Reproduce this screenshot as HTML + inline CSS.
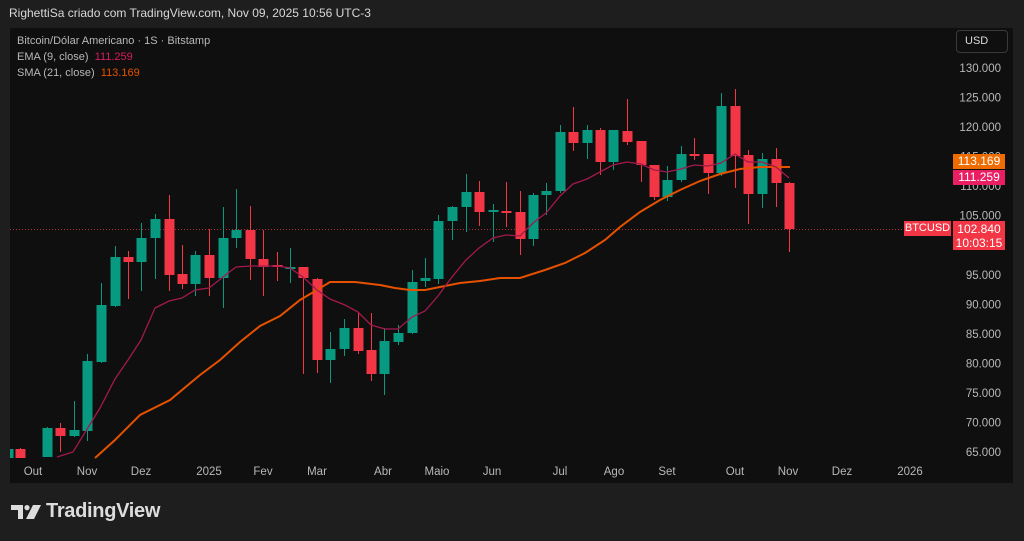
<!DOCTYPE html>
<html><head><meta charset="utf-8"><style>
body{margin:0;width:1024px;height:541px;background:#1e1e1e;overflow:hidden;font-family:"Liberation Sans",sans-serif;position:relative}
.t{position:absolute;white-space:nowrap}
</style></head><body>
<div class="t" style="left:9px;top:6px;font-size:12px;color:#d8d8d8">RighettiSa criado com TradingView.com, Nov 09, 2025 10:56 UTC-3</div>
<div style="position:absolute;left:10px;top:28px;width:1003px;height:455px;background:#0f0f0f"></div>
<svg id="c" width="1024" height="541" style="position:absolute;left:0;top:0"></svg>
<div class="t" style="left:17px;top:33px;font-size:11px;color:#b8b8b8;line-height:16px">Bitcoin/Dólar Americano · 1S · Bitstamp<br>EMA (9, close) &nbsp;<span style="color:#d81b60">111.259</span><br>SMA (21, close) &nbsp;<span style="color:#e65100">113.169</span></div>
<div style="position:absolute;left:956px;top:30px;width:52px;height:23px;border:1px solid #3a3a3a;border-radius:4px;box-sizing:border-box;color:#ddd;font-size:11px;line-height:21px;padding-left:8px">USD</div>
<div class="t" style="left:953px;top:154px;width:52px;height:15px;background:#ef6c00;color:#fff;font-size:12px;line-height:15px;text-align:center">113.169</div>
<div class="t" style="left:953px;top:170px;width:52px;height:15px;background:#e91e63;color:#fff;font-size:12px;line-height:15px;text-align:center">111.259</div>
<div class="t" style="left:904px;top:221px;width:47px;height:15px;background:#f23645;color:#fff;font-size:11px;line-height:15px;text-align:center">BTCUSD</div>
<div class="t" style="left:953px;top:221px;width:52px;height:29px;background:#f23645;color:#fff;font-size:12px;line-height:14px;text-align:center;padding-top:1px;box-sizing:border-box">102.840<br>10:03:15</div>
<svg width="30" height="14" style="position:absolute;left:11px;top:505px" viewBox="0 0 30 14"><path d="M0 0H12V14H7V5H0Z" fill="#ddd"/><circle cx="16" cy="2.6" r="2.6" fill="#ddd"/><path d="M22 0H30L23 14H15Z" fill="#ddd"/></svg>
<div class="t" style="left:46px;top:500px;font-size:20px;font-weight:bold;color:#ddd;letter-spacing:-0.3px">TradingView</div>
<script>
var s='';
function Y(p){return 68+(130000-p)/5000*29.54}
for(var p=65000;p<=130000;p+=5000){var y=Y(p);s+='<text x="1001" y="'+(y+4)+'" fill="#b8b8b8" font-size="11.5" text-anchor="end" font-family="Liberation Sans">'+(p/1000).toFixed(3)+'</text>'}
var xl=[['Out',33],['Nov',87],['Dez',141],['2025',209],['Fev',263],['Mar',317],['Abr',383],['Maio',437],['Jun',492],['Jul',560],['Ago',614],['Set',667],['Out',735],['Nov',788],['Dez',842],['2026',910]];
xl.forEach(function(a){s+='<text x="'+a[1]+'" y="475" fill="#b8b8b8" font-size="11.5" text-anchor="middle" font-family="Liberation Sans">'+a[0]+'</text>'});
s+='<line x1="10" y1="229.5" x2="904" y2="229.5" stroke="#f23645" stroke-dasharray="1 2" opacity="0.7"/>';
var C=[[8,458,449,448,458,1],[20,449,458,448,458,0],[47,457,428,427,457,1],[60,428,436,423,452,0],[74,436,430,401,437,1],[87,431,361,354,441,1],[101,362,305,283,363,1],[115,306,257,246,307,1],[128,257,262,251,299,0],[141,262,238,223,291,1],[155,238,219,214,279,1],[169,219,275,195,291,0],[182,274,284,245,289,0],[195,284,255,251,296,1],[209,255,278,229,296,0],[223,278,238,207,308,1],[236,238,230,189,248,1],[250,230,259,206,280,0],[263,259,267,230,296,0],[277,265,267,252,281,0],[290,268,267,248,283,1],[303,267,278,267,374,0],[317,279,360,278,373,0],[330,360,349,332,383,1],[344,349,328,319,356,1],[358,328,351,312,354,0],[371,350,374,313,381,0],[384,374,341,328,395,1],[398,342,333,325,345,1],[412,333,282,270,334,1],[425,281,278,258,287,1],[438,279,221,215,284,1],[452,221,207,206,240,1],[466,207,192,174,232,1],[479,192,212,181,226,0],[493,211,210,204,242,1],[506,211,213,182,227,0],[520,212,239,191,255,0],[533,239,195,193,246,1],[546,195,191,183,215,1],[560,191,132,125,193,1],[573,132,143,107,151,0],[587,143,130,125,159,1],[600,130,162,128,175,0],[613,162,130,130,170,1],[627,131,142,99,145,0],[641,141,165,141,182,0],[654,165,197,165,200,0],[667,197,180,166,201,1],[681,180,154,146,182,1],[694,154,155,138,160,0],[708,154,173,154,194,0],[721,173,106,93,176,1],[735,106,156,89,188,0],[748,155,194,150,224,0],[762,194,159,153,208,1],[776,159,183,148,207,0],[789,183,229,182,252,0]];
C.forEach(function(c){var col=c[5]?'#089981':'#f23645';var t=Math.min(c[1],c[2]),b=Math.max(c[1],c[2]);if(b-t<2)b=t+2;
s+='<line x1="'+(c[0]+.5)+'" y1="'+c[3]+'" x2="'+(c[0]+.5)+'" y2="'+c[4]+'" stroke="'+col+'"/>';
s+='<rect x="'+(c[0]-4.5)+'" y="'+t+'" width="10" height="'+(b-t)+'" fill="'+col+'"/>'});
var sma='95,458 115,440 140,415 170,400 200,375 220,360 240,342 260,326 280,316 300,300 317,290 330,282 355,282 380,285 395,288 410,290 425,290 440,287 460,283 480,281 500,278 520,278 545,270 565,263 585,253 605,240 620,227 640,212 660,200 680,190 700,181 720,174 740,169 760,167 790,167';
var ema='57,457 73,452 100,408 115,379 128,360 141,340 155,308 169,301 182,298 195,290 209,288 223,277 236,267 250,266 263,266 277,266 290,268 303,277 317,290 330,299 345,305 358,312 371,325 385,329 398,329 412,317 425,311 438,296 452,277 466,260 479,248 493,238 506,235 520,236 533,223 546,213 560,196 573,184 587,179 600,172 613,165 627,162 641,164 654,170 667,172 681,169 694,165 708,166 721,163 735,154 748,162 762,162 776,167 789,178';
s+='<polyline points="'+sma+'" fill="none" stroke="#e65100" stroke-width="2"/>';
s+='<polyline points="'+ema+'" fill="none" stroke="#a3194d" stroke-width="1.3"/>';
document.getElementById('c').innerHTML=s;
s='';
</script>
<div style="position:absolute;left:0;top:28px;width:10px;height:455px;background:#1e1e1e"></div>
</body></html>
